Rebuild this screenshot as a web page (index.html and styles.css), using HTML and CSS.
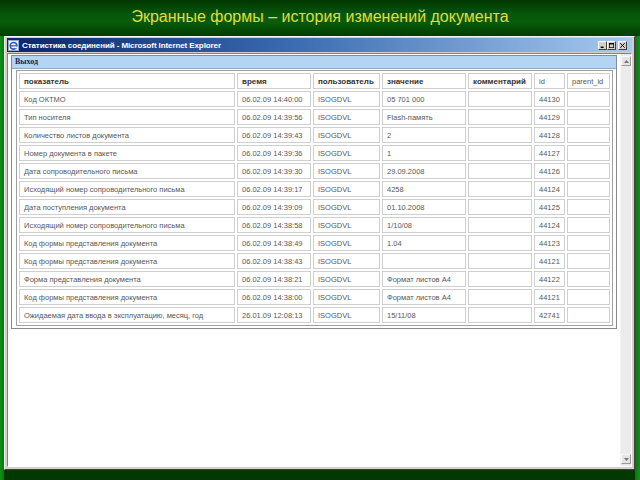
FILE: index.html
```html
<!DOCTYPE html>
<html lang="ru">
<head>
<meta charset="utf-8">
<title>Экранные формы</title>
<link rel="stylesheet" href="styles.css">
</head>
<body>
<header class="slide-title">Экранные формы – история изменений документа</header>
<div class="window">
  <div class="titlebar">
    <svg class="ie-icon" width="11" height="11" viewBox="0 0 11 11">
      <rect x="0.5" y="0.5" width="10" height="10" fill="#f4f4f4" stroke="#9aa6c8"/>
      <circle cx="5.5" cy="5.8" r="3.3" fill="none" stroke="#2a5cc8" stroke-width="1.6"/>
      <rect x="2.4" y="5.2" width="6.2" height="1.3" fill="#2a5cc8"/>
      <rect x="6.4" y="6.6" width="3" height="1.6" fill="#f4f4f4"/>
    </svg>
    <span class="tb-text">Статистика соединений - Microsoft Internet Explorer</span>
    <div class="tb-buttons">
      <span class="tb-btn"><svg width="7" height="7" viewBox="0 0 7 7"><rect x="1" y="5" width="4" height="2" fill="#000"/></svg></span>
      <span class="tb-btn"><svg width="7" height="7" viewBox="0 0 7 7"><rect x="0.5" y="0.5" width="6" height="6" fill="none" stroke="#000"/><rect x="0" y="0" width="7" height="2" fill="#000"/></svg></span>
      <span class="tb-btn close"><svg width="7" height="7" viewBox="0 0 7 7"><path d="M0.5 0.5 L6.5 6.5 M6.5 0.5 L0.5 6.5" stroke="#000" stroke-width="1.4"/></svg></span>
    </div>
  </div>
  <div class="client">
    <div class="page">
      <div class="panel">
        <div class="panel-head">Выход</div>
        <table class="grid">
          <colgroup>
            <col class="c1"><col class="c2"><col class="c3"><col class="c4"><col class="c5"><col class="c6"><col class="c7">
          </colgroup>
          <thead>
            <tr><th>показатель</th><th>время</th><th>пользователь</th><th>значение</th><th>комментарий</th><th class="plain">id</th><th class="plain">parent_id</th></tr>
          </thead>
          <tbody>
            <tr><td>Код ОКТМО</td><td>06.02.09 14:40:00</td><td>ISOGDVL</td><td>05 701 000</td><td></td><td>44130</td><td></td></tr>
            <tr><td>Тип носителя</td><td>06.02.09 14:39:56</td><td>ISOGDVL</td><td>Flash-память</td><td></td><td>44129</td><td></td></tr>
            <tr><td>Количество листов документа</td><td>06.02.09 14:39:43</td><td>ISOGDVL</td><td>2</td><td></td><td>44128</td><td></td></tr>
            <tr><td>Номер документа в пакете</td><td>06.02.09 14:39:36</td><td>ISOGDVL</td><td>1</td><td></td><td>44127</td><td></td></tr>
            <tr><td>Дата сопроводительного письма</td><td>06.02.09 14:39:30</td><td>ISOGDVL</td><td>29.09.2008</td><td></td><td>44126</td><td></td></tr>
            <tr><td>Исходящий номер сопроводительного письма</td><td>06.02.09 14:39:17</td><td>ISOGDVL</td><td>4258</td><td></td><td>44124</td><td></td></tr>
            <tr><td>Дата поступления документа</td><td>06.02.09 14:39:09</td><td>ISOGDVL</td><td>01.10.2008</td><td></td><td>44125</td><td></td></tr>
            <tr><td>Исходящий номер сопроводительного письма</td><td>06.02.09 14:38:58</td><td>ISOGDVL</td><td>1/10/08</td><td></td><td>44124</td><td></td></tr>
            <tr><td>Код формы представления документа</td><td>06.02.09 14:38:49</td><td>ISOGDVL</td><td>1.04</td><td></td><td>44123</td><td></td></tr>
            <tr><td>Код формы представления документа</td><td>06.02.09 14:38:43</td><td>ISOGDVL</td><td></td><td></td><td>44121</td><td></td></tr>
            <tr><td>Форма представления документа</td><td>06.02.09 14:38:21</td><td>ISOGDVL</td><td>Формат листов А4</td><td></td><td>44122</td><td></td></tr>
            <tr><td>Код формы представления документа</td><td>06.02.09 14:38:00</td><td>ISOGDVL</td><td>Формат листов А4</td><td></td><td>44121</td><td></td></tr>
            <tr><td>Ожидаемая дата ввода в эксплуатацию, месяц, год</td><td>26.01.09 12:08:13</td><td>ISOGDVL</td><td>15/11/08</td><td></td><td>42741</td><td></td></tr>
          </tbody>
        </table>
      </div>
    </div>
    <div class="scrollbar">
      <div class="sb-btn"><svg width="5" height="3" viewBox="0 0 5 3"><path d="M0 3 L2.5 0 L5 3 Z" fill="#777"/></svg></div>
      <div class="sb-track"></div>
      <div class="sb-btn"><svg width="5" height="3" viewBox="0 0 5 3"><path d="M0 0 L2.5 3 L5 0 Z" fill="#777"/></svg></div>
    </div>
  </div>
</div>
</body>
</html>
```
FILE: styles.css
```css
* { box-sizing: border-box; }

html, body {
  margin: 0;
  padding: 0;
}

body {
  width: 640px;
  height: 480px;
  overflow: hidden;
  background: linear-gradient(90deg, #12901a 0px, #0a6e0c 5px, #0a6e0c 634px, #13901a 640px);
  font-family: "Liberation Sans", Arial, sans-serif;
}

.slide-title {
  height: 36px;
  display: flex;
  align-items: center;
  justify-content: center;
  padding-bottom: 2px;
  color: #e0dc3a;
  font-size: 16px;
  background: linear-gradient(180deg, #013601 0%, #07570a 40%, #085c0a 60%, #023d03 100%);
}

.window {
  margin-left: 4px;
  width: 631px;
  height: 434px;
  display: flex;
  flex-direction: column;
  padding: 1px 2px 2px 2px;
  background: #d4d0c8;
  border: 1px solid;
  border-color: #f4f4f4 #404040 #404040 #f4f4f4;
  box-shadow: 0 10px 0 #023802;
}

.titlebar {
  height: 14px;
  display: flex;
  align-items: center;
  padding: 0 2px 0 1px;
  background: linear-gradient(90deg, #0a246a 0%, #3a6ab0 45%, #a6caf0 100%);
}

.ie-icon { flex: none; margin-right: 3px; }

.tb-text {
  color: #ffffff;
  font-size: 8px;
  font-weight: bold;
  white-space: nowrap;
  letter-spacing: -0.1px;
}

.tb-buttons {
  margin-left: auto;
  display: flex;
}

.tb-btn {
  width: 9px;
  height: 9px;
  display: flex;
  align-items: center;
  justify-content: center;
  background: #d4d0c8;
  border: 1px solid;
  border-color: #ffffff #404040 #404040 #ffffff;
}

.tb-btn svg { width: 5px; height: 5px; }

.tb-btn.close { margin-left: 2px; margin-right: 3px; }

.client {
  flex: 1;
  margin-top: 1px;
  display: flex;
  background: #ffffff;
  border: 1px solid;
  border-color: #808080 #ffffff #ffffff #808080;
}

.page {
  flex: 1;
  padding: 1px 3px 0 3px;
}

.panel {
  border: 1px solid #8a8a8a;
  padding: 0 3px 2px 4px;
}

.panel-head {
  height: 13px;
  margin: 0 -3px 1px -4px;
  padding-left: 3px;
  background: #b3d4f2;
  border-bottom: 1px solid #8aa8c8;
  color: #1c2450;
  font-family: "Liberation Serif", "Times New Roman", serif;
  font-size: 8px;
  font-weight: bold;
  line-height: 12px;
}

.grid {
  width: 597px;
  table-layout: fixed;
  border-collapse: separate;
  border-spacing: 2px;
  border: 1px solid #a0a0a0;
  font-size: 7.5px;
  color: #585858;
}

.grid col.c1 { width: 216px; }
.grid col.c2 { width: 74px; }
.grid col.c3 { width: 67px; }
.grid col.c4 { width: 84px; }
.grid col.c5 { width: 64px; }
.grid col.c6 { width: 31px; }
.grid col.c7 { width: 43px; }

.grid th,
.grid td {
  height: 16px;
  padding: 0 0 0 4px;
  border: 1px solid #cfcfcf;
  text-align: left;
  white-space: nowrap;
  overflow: hidden;
  vertical-align: middle;
}

.grid th {
  font-size: 8px;
  font-weight: bold;
  color: #333333;
}

.grid th.plain {
  font-size: 7.5px;
  font-weight: normal;
  color: #585858;
}

.scrollbar {
  width: 11px;
  display: flex;
  flex-direction: column;
  background: #ebebeb;
  border-left: 1px solid #f4f4f4;
}

.sb-btn {
  height: 10px;
  display: flex;
  align-items: center;
  justify-content: center;
  background: #e4e4e4;
  border: 1px solid;
  border-color: #f8f8f8 #9a9a9a #9a9a9a #f8f8f8;
  margin-top: 2px;
}

.sb-btn:last-child { margin-top: 0; margin-bottom: 2px; }

.sb-track { flex: 1; }
```
